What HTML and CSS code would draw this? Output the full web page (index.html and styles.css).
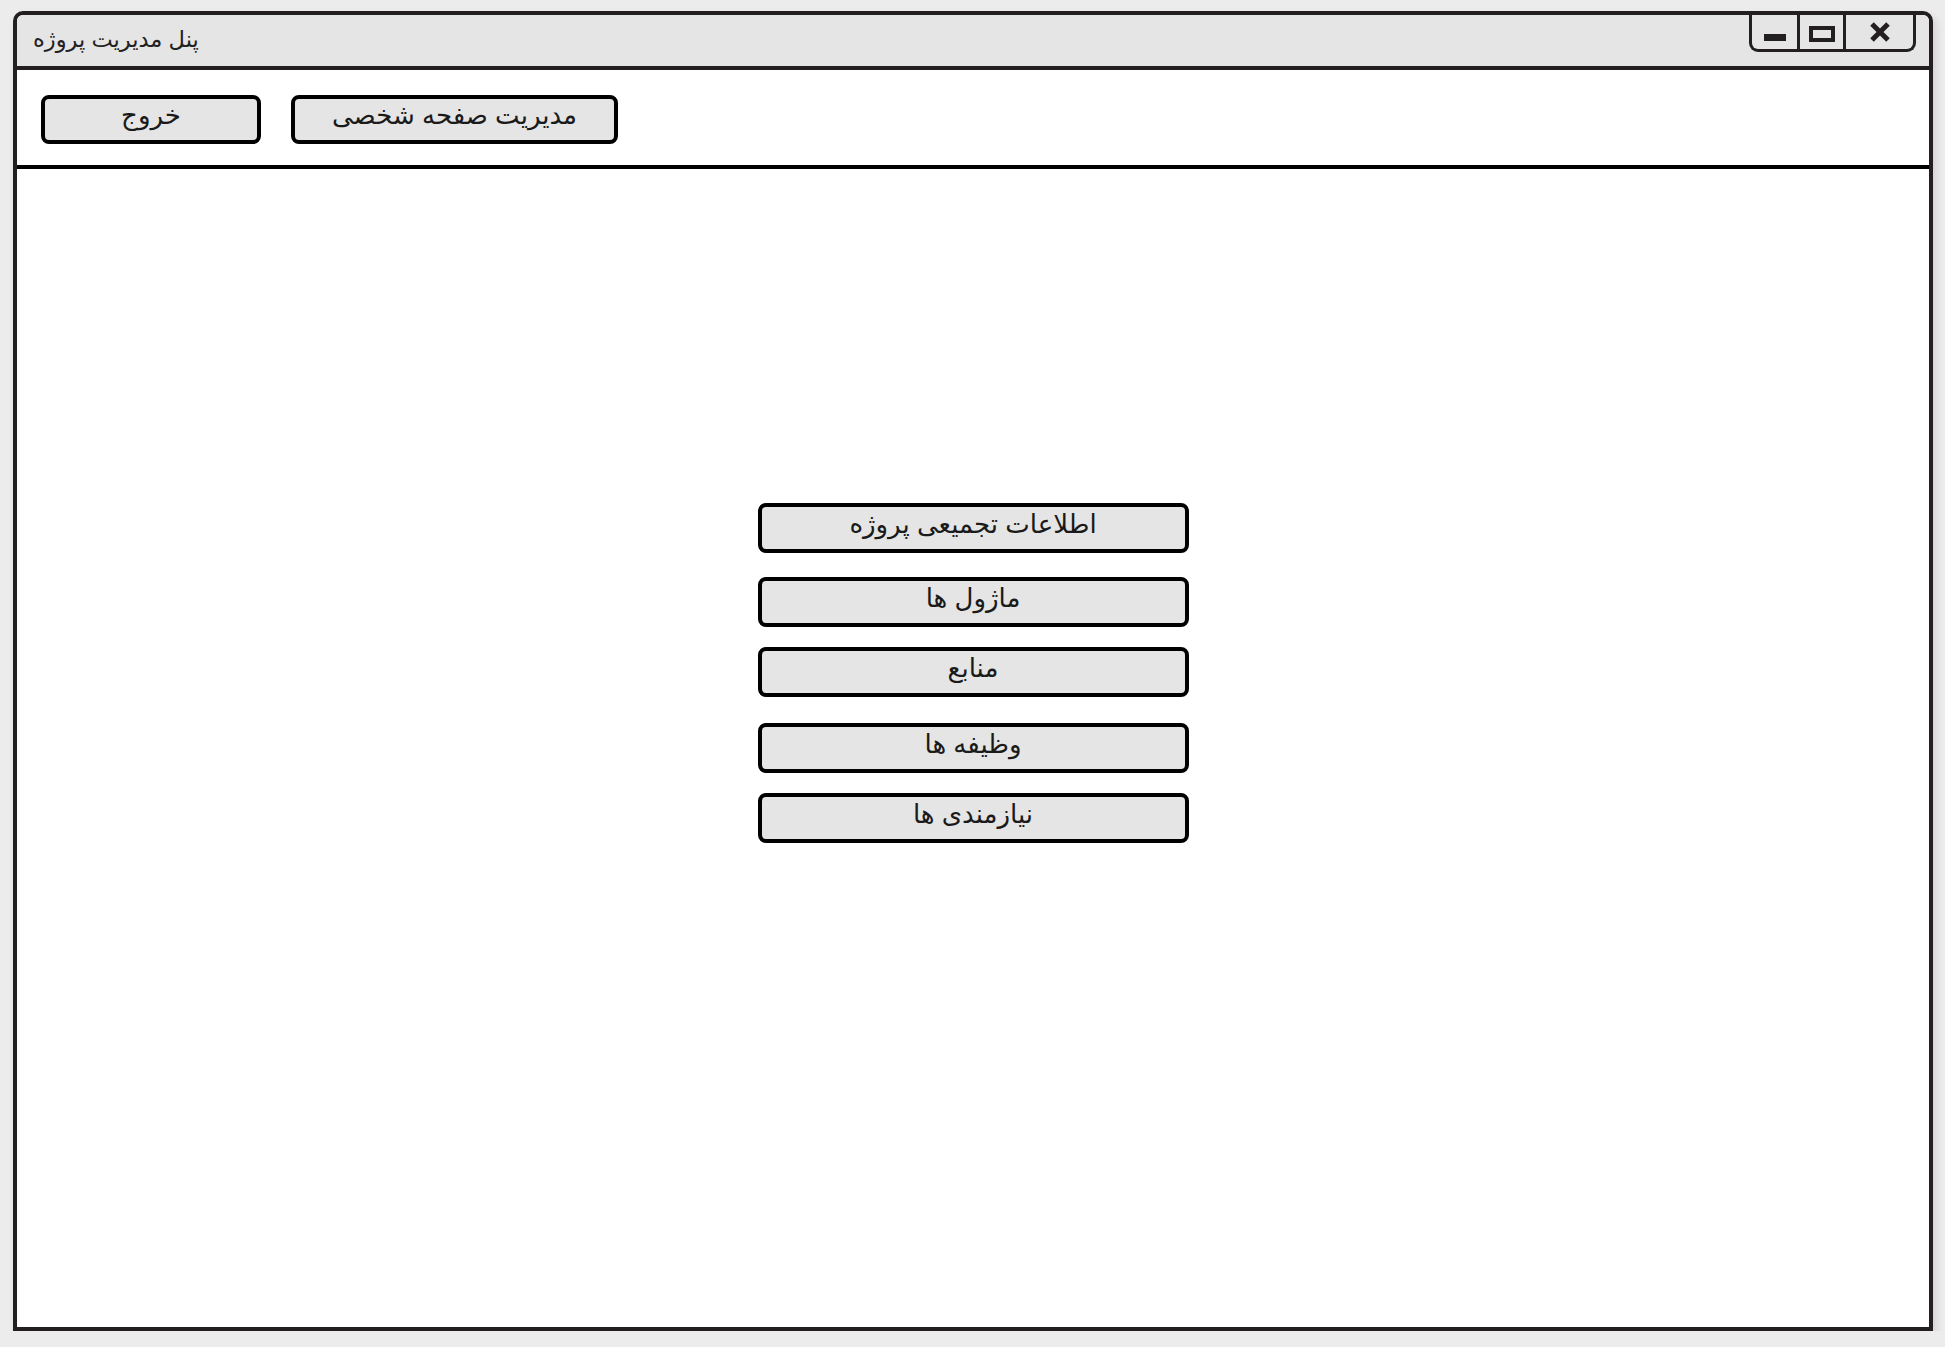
FILE: index.html
```html
<!DOCTYPE html>
<html lang="fa">
<head>
<meta charset="utf-8">
<title>پنل مدیریت پروژه</title>
<link rel="stylesheet" href="styles.css">
</head>
<body>
<div class="window">
  <div class="titlebar">
    <span class="title" dir="rtl">پنل مدیریت پروژه</span>
    <div class="controls">
      <div class="ctl ctl-min"><span class="min-bar"></span></div>
      <div class="ctl ctl-max"><span class="max-box"></span></div>
      <div class="ctl ctl-close">
        <svg width="22" height="20" viewBox="0 0 22 20"><path d="M3 2 L19 18 M19 2 L3 18" stroke="#231f20" stroke-width="5" stroke-linecap="butt"/></svg>
      </div>
    </div>
  </div>
  <div class="toolbar">
    <button class="btn btn-exit" dir="rtl">خروج</button>
    <button class="btn btn-profile" dir="rtl">مدیریت صفحه شخصی</button>
  </div>
  <div class="content">
    <div class="menu">
      <button class="btn menu-btn" dir="rtl">اطلاعات تجمیعی پروژه</button>
      <button class="btn menu-btn m2" dir="rtl">ماژول ها</button>
      <button class="btn menu-btn m3" dir="rtl">منابع</button>
      <button class="btn menu-btn m4" dir="rtl">وظیفه ها</button>
      <button class="btn menu-btn m5" dir="rtl">نیازمندی ها</button>
    </div>
  </div>
</div>
</body>
</html>
```
FILE: styles.css
```css
html, body {
  margin: 0;
  padding: 0;
  background: #ececec;
}
body {
  font-family: "Liberation Sans", "DejaVu Sans", sans-serif;
  color: #1a1a1a;
}
.window {
  box-sizing: border-box;
  margin: 11px 0 0 13px;
  width: 1920px;
  height: 1320px;
  border: 4px solid #231f20;
  border-radius: 10px 10px 0 0;
  background: #fff;
  box-shadow: 3px 5px 8px rgba(0,0,0,0.12);
  display: flex;
  flex-direction: column;
}
.titlebar {
  position: relative;
  height: 51px;
  background: #e5e5e5;
  border-bottom: 4px solid #231f20;
  border-radius: 6px 6px 0 0;
  display: flex;
  align-items: center;
  padding-left: 16px;
}
.title {
  font-size: 22.5px;
  color: #222;
  margin-top: -2px;
}
.controls {
  position: absolute;
  top: 0;
  right: 13px;
  height: 34px;
  display: flex;
  border: 3px solid #231f20;
  border-top: none;
  border-radius: 0 0 9px 9px;
}
.ctl {
  display: flex;
  align-items: center;
  justify-content: center;
}
.ctl-min {
  width: 45px;
  border-right: 3px solid #231f20;
}
.ctl-max {
  width: 43px;
  border-right: 3px solid #231f20;
}
.ctl-close {
  width: 67px;
}
.min-bar {
  width: 22px;
  height: 7px;
  background: #231f20;
  margin-top: 11px;
}
.max-box {
  box-sizing: border-box;
  width: 26px;
  height: 16px;
  border: 4px solid #231f20;
  margin-top: 4px;
}
.toolbar {
  height: 99px;
  border-bottom: 4px solid #000;
  display: flex;
  align-items: flex-start;
  padding: 25px 0 0 24px;
  box-sizing: border-box;
  gap: 30px;
}
.btn {
  box-sizing: border-box;
  background: #e5e5e5;
  border: 4px solid #000;
  border-radius: 8px;
  font-family: "Liberation Sans", "DejaVu Sans", sans-serif;
  font-size: 26px;
  color: #1a1a1a;
  padding: 0 0 9px 0;
  height: 49px;
  line-height: 1;
}
.btn-exit { width: 220px; }
.btn-profile { width: 327px; }
.content {
  flex: 1;
  display: flex;
  justify-content: center;
}
.menu {
  display: flex;
  flex-direction: column;
  padding-top: 334px;
}
.menu-btn {
  width: 431px;
  height: 50px;
}
.m2 { margin-top: 24px; }
.m3 { margin-top: 20px; }
.m4 { margin-top: 26px; }
.m5 { margin-top: 20px; }
```
